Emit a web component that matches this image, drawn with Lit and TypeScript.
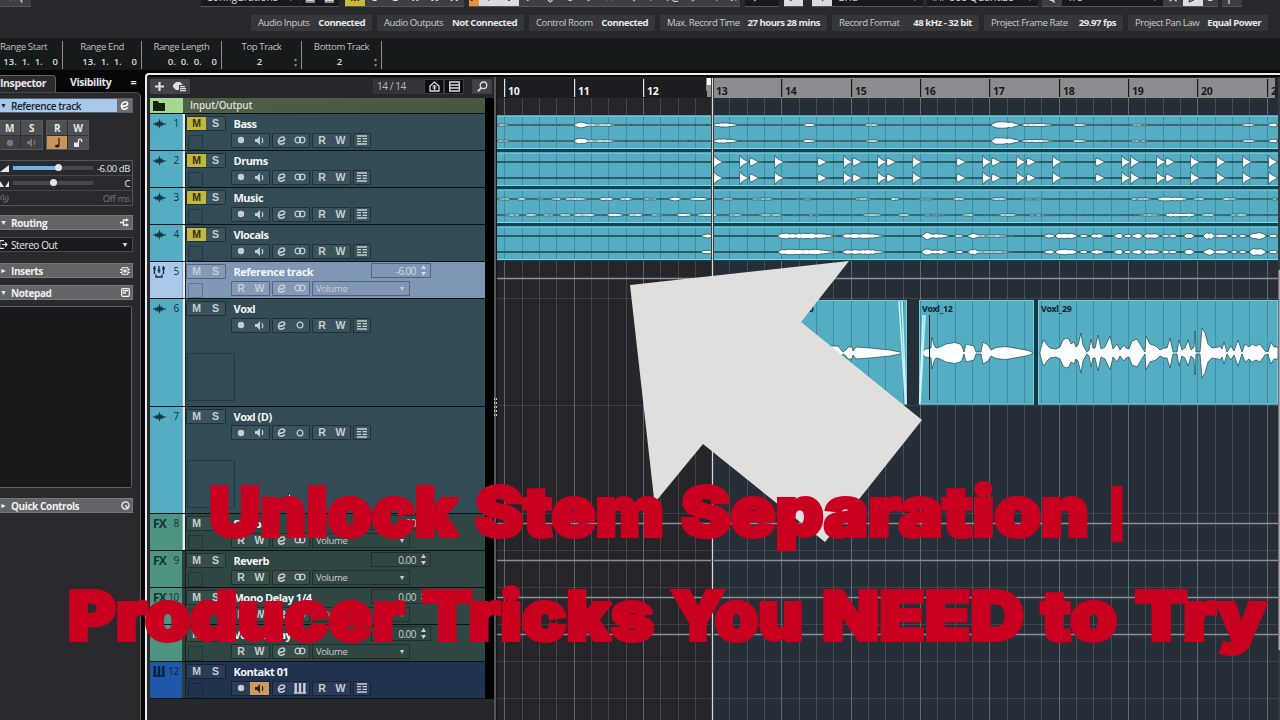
import { LitElement, html, svg, css, nothing } from 'lit';
import { customElement, property } from 'lit/decorators.js';
import { classMap } from 'lit/directives/class-map.js';

type Kind = 'audio' | 'ref' | 'fx' | 'inst';

interface Track {
  no: number;
  name: string;
  kind: Kind;
  muted?: boolean;
  mono?: boolean;
  tall?: boolean;
  linked?: boolean;
  gain?: string;
}

const TRACKS: Track[] = [
  { no: 1, name: 'Bass', kind: 'audio', muted: true, linked: true },
  { no: 2, name: 'Drums', kind: 'audio', muted: true, linked: true },
  { no: 3, name: 'Music', kind: 'audio', muted: true, linked: true },
  { no: 4, name: 'Vlocals', kind: 'audio', muted: true, linked: true },
  { no: 5, name: 'Reference track', kind: 'ref', linked: true, gain: '-6.00' },
  { no: 6, name: 'Voxl', kind: 'audio', mono: true, tall: true, linked: true },
  { no: 7, name: 'Voxl (D)', kind: 'audio', mono: true, tall: true, linked: true },
  { no: 8, name: 'Slapback', kind: 'fx', linked: true, gain: '0.00' },
  { no: 9, name: 'Reverb', kind: 'fx', gain: '0.00' },
  { no: 10, name: 'Mono Delay 1/4', kind: 'fx', gain: '0.00' },
  { no: 11, name: 'Vocal Delay', kind: 'fx', gain: '0.00' },
  { no: 12, name: 'Kontakt 01', kind: 'inst' },
];

const icon = (w: number, h: number, body: unknown) =>
  html`<svg width=${w} height=${h} viewBox="0 0 ${w} ${h}" fill="none" stroke="currentColor">${body}</svg>`;

const icons = {
  wave: icon(13, 12, svg`<path d="M0 5.500h2l.8-2 .8 2L5 3l.5 1.500L6.500.3l1 4.200.8-2 .8 3 .9-1.500.6 1.500H13v1h-2.500l-.7 1.500-.8-1.500-.8 2.500-.7-2-1 4-.9-4L5 9.300 4 7l-1 1.500-.8-2H0z" fill="currentColor" stroke="none"/>`),
  faders: icon(12, 12, svg`<path d="M1.500 0v8M6 0v7M10.500 0v8M0 2.500h3M4.500 4.500h3M9 2.500h3M3 8.500v2.500h6v-2.500" stroke-width="1.400"/>`),
  keys: icon(12, 11, svg`<path d="M1.700 0v10M6 0v10M10.300 0v10" stroke-width="2.400"/><path d="M0 10h12" stroke-width="1.500"/>`),
  folder: icon(12, 10, svg`<path d="M0 0h5l1 2h6v8H0z" fill="currentColor" stroke="none"/>`),
  rec: icon(8, 8, svg`<circle cx="4" cy="4" r="3.200" fill="currentColor" stroke="none"/>`),
  speaker: icon(9, 9, svg`<path d="M0 3h2l3-3v9L2 6H0z" fill="currentColor" stroke="none"/><path d="M7 2q1.500 2.500 0 5" stroke-width="1.200"/>`),
  edit: icon(9, 9, svg`<path d="M.8 5.200C4 5.600 8 4.600 7.700 2.500 7.400.3 3.400.4 2 3 .6 5.800 1.800 8.200 4.200 8.200c1.400 0 2.700-.7 3.600-1.700" stroke-width="1.500"/>`),
  stereo: icon(12, 8, svg`<circle cx="3.800" cy="4" r="2.800" stroke-width="1.200"/><circle cx="8.200" cy="4" r="2.800" stroke-width="1.200"/>`),
  mono: icon(8, 8, svg`<circle cx="4" cy="4" r="2.900" stroke-width="1.200"/>`),
  lanes: icon(10, 10, svg`<path d="M0 1h10M0 9h10M0 3.700h4M0 6.300h4M5.500 3.700H10M5.500 6.300H10" stroke-width="1.300"/>`),
  search: icon(11, 11, svg`<circle cx="6.500" cy="4.300" r="3.300" stroke-width="1.300"/><path d="M4.200 6.800 .8 10.300" stroke-width="1.700"/>`),
  house: icon(11, 11, svg`<path d="M1 5 5.500 1 10 5v5H1z" stroke-width="1.300"/><path d="M3.500 5h4M3.500 7h4M5.500 4v5"/>`),
  list: icon(11, 11, svg`<path d="M.7 1h9.600v9H.7zM1 4h9M1 7h9" stroke-width="1.300"/>`),
  plus: icon(9, 9, svg`<path d="M4.500 0v9M0 4.500h9" stroke-width="2.200"/>`),
  presets: icon(13, 10, svg`<path d="M3 0h4l3 3H6v5H3L0 5V3z" fill="currentColor" stroke="none"/><path d="M7 4.700h5M7 6.700h6M7 8.700h6" stroke-width="1.200"/>`),
  note: icon(7, 10, svg`<path d="M5 0v8" stroke-width="1.200"/><ellipse cx="3.200" cy="8" rx="2.200" ry="1.600" fill="currentColor" stroke="none"/>`),
  lock: icon(9, 9, svg`<path d="M0 4.500h5V9H0z" fill="currentColor" stroke="none"/><path d="M4.500 5V2.200Q6 0 7.600 2.200V4" stroke-width="1.300"/>`),
  ramp: icon(9, 7, svg`<path d="M0 7 9 0v7z" fill="currentColor" stroke="none"/>`),
  pan: icon(9, 7, svg`<path d="M0 1l4 6H0zM9 1L5 7h4z" fill="currentColor" stroke="none"/>`),
  delay: icon(9, 9, svg`<circle cx="4.500" cy="4.500" r="1.500"/><circle cx="4.500" cy="4.500" r="3.800" stroke-dasharray="7 3"/>`),
  route: icon(10, 9, svg`<path d="M0 4.500h3M7 2H3.500v5H7" stroke-width="1.300"/><path d="M6 .2l3 1.800-3 1.800zM6 5.200l3 1.800-3 1.800z" fill="currentColor" stroke="none"/>`),
  output: icon(9, 9, svg`<path d="M5 .7H.7v7.600H5M3 4.500h5M6 2.500l2 2-2 2" stroke-width="1.200"/>`),
  insert: icon(10, 8, svg`<path d="M2 .7h6v6.600H2zM0 2.500h2M0 5.500h2M8 2.500h2M8 5.500h2" stroke-width="1"/><path d="M3.500 2.500h3v3h-3z" fill="currentColor" stroke="none"/>`),
  pad: icon(9, 9, svg`<rect x=".7" y=".7" width="7.600" height="7.600" rx="1" stroke-width="1.300"/><path d="M2 2.800h5M2 5h3" stroke-width="1.500"/>`),
  knob: icon(9, 9, svg`<circle cx="4.500" cy="4.500" r="3.600" stroke-width="1.300"/><path d="M4.500 4.500 7 7.500" stroke-width="1.500"/>`),
};

@customElement('daw-toolbar')
export class DawToolbar extends LitElement {
  static styles = css`
    :host {
      display: flex;
      height: 7px;
      overflow: hidden;
      align-items: flex-end;
      background: #28292d;
      color: #d8d8da;
      font: 10.5px 'Open Sans', sans-serif;
    }
    .item {
      display: flex;
      flex: none;
      align-items: center;
      justify-content: center;
      height: 23px;
      box-sizing: border-box;
      padding-top: 3px;
      background: #3e3f43;
      border-bottom: 1px solid #54555a;
      font-weight: 700;
    }
    .drop {
      background: #17181b;
      justify-content: space-between;
      padding: 3px 5px 0;
      font-weight: 400;
    }
    .dark { background: #17181b; }
    .yellow { background: #cbb93a; color: #222; }
    .orange { background: #e8913c; color: #222; }
    .white { background: #dcdcde; color: #222; }
    .gap { flex: none; }
  `;

  items: [string, number, string][] = [
    ['', 31, '✕ ('], ['gap', 170, ''], ['drop', 98, 'Configurations'], ['gap', 1, ''], ['dark', 19, '▣'], ['dark', 20, '▤'],
    ['gap', 6, ''], ['yellow', 20, 'M'], ['', 20, 'S'], ['', 20, 'L'], ['', 20, 'R'], ['', 19, 'W'], ['', 20, 'A'], ['gap', 5, ''],
    ['orange', 10, '▸'], ['white', 20, '▾'], ['white', 20, 'I'], ['', 20, '/'], ['', 21, '◇'], ['', 20, '0'], ['', 17, '!'],
    ['', 24, '✕'], ['', 20, '⟍'], ['', 20, '●'], ['', 24, '♪@'], ['', 22, '⟋'], ['', 20, '▾'], ['', 13, '\\●'], ['gap', 5, ''],
    ['dark', 34, '⟋  ▾'], ['gap', 5, ''], ['white', 19, '⟋'], ['gap', 9, ''], ['white', 20, '✳'], ['drop', 91, 'Grid'], ['gap', 4, ''],
    ['drop', 111, '## Use Quantize'], ['gap', 4, ''], ['', 20, 'Q'], ['drop', 101, '1/8'], ['', 20, '⋏'], ['white', 20, '▷'], ['', 15, 'S'],
    ['gap', 4, ''], ['', 20, '|='],
  ];

  render() {
    return this.items.map(([cls, w, text]) => cls === 'gap'
      ? html`<span class="gap" style="width:${w}px"></span>`
      : html`<span class="item ${cls}" style="width:${w}px">${text}${cls === 'drop' ? html`<span>▾</span>` : nothing}</span>`);
  }
}

@customElement('daw-status')
export class DawStatus extends LitElement {
  static styles = css`
    :host {
      display: flex;
      gap: 5px;
      height: 31px;
      box-sizing: border-box;
      padding: 8px 0 7px 251px;
      background: #28292d;
      color: #c9cacc;
      font: 9.600px/15px 'Open Sans', sans-serif;
      letter-spacing: -0.45px;
      white-space: nowrap;
    }
    .pill {
      display: flex;
      flex: none;
      justify-content: space-between;
      box-sizing: border-box;
      padding: 0 7px;
      background: #36373b;
      border-radius: 1px;
    }
    b { color: #e8e8ea; letter-spacing: -0.5px; }
  `;

  items: [string, string, number][] = [
    ['Audio Inputs', 'Connected', 121],
    ['Audio Outputs', 'Not Connected', 147],
    ['Control Room', 'Connected', 126],
    ['Max. Record Time', '27 hours 28 mins', 167],
    ['Record Format', '48 kHz - 32 bit', 147],
    ['Project Frame Rate', '29.97 fps', 139],
    ['Project Pan Law', 'Equal Power', 140],
  ];

  render() {
    return this.items.map(([label, value, w]) =>
      html`<div class="pill" style="width:${w}px"><span>${label}</span><b>${value}</b></div>`);
  }
}

@customElement('daw-infoline')
export class DawInfoline extends LitElement {
  static styles = css`
    :host {
      display: flex;
      height: 32px;
      box-sizing: border-box;
      padding: 3px 0 1px;
      background: #171a1b;
      color: #bfc1c3;
      font: 9.600px/12px 'Open Sans', sans-serif;
      letter-spacing: -0.4px;
    }
    .cell {
      display: flex;
      flex: none;
      flex-direction: column;
      gap: 3px;
      box-sizing: border-box;
      border-right: 1px solid #8b8d8f;
      white-space: pre;
      text-align: center;
    }
    .cell.first { text-align: left; }
    .value { font-weight: 600; font-size: 9.5px; color: #dcdcde; letter-spacing: 0; }
    .right { text-align: right; padding-right: 4px; }
    .spin { display: flex; justify-content: center; position: relative; padding-right: 4px; }
    .arrows {
      position: absolute;
      right: 3px;
      top: 0;
      font-size: 5px;
      line-height: 6px;
      color: #85878a;
    }
  `;

  render() {
    const pos = (label: string, value: string, w: number, cls = '') =>
      html`<div class="cell ${cls}" style="width:${w}px"><span>${label}</span><span class="value right">${value}</span></div>`;
    const num = (label: string) => html`<div class="cell" style="width:80px"><span>${label}</span><span class="value spin">2<span class="arrows">▲<br>▼</span></span></div>`;
    return html`
      ${pos('Range Start', '13.  1.  1.    0', 63, 'first')}
      ${pos('Range End', '13.  1.  1.    0', 79)}
      ${pos('Range Length', '0.  0.  0.    0', 80)}
      ${num('Top Track')}${num('Bottom Track')}
    `;
  }
}

@customElement('daw-inspector')
export class DawInspector extends LitElement {
  static styles = css`
    :host {
      display: flex;
      flex-direction: column;
      width: 145px;
      flex: none;
      background: #060607;
      color: #e6e6e8;
      font: 10px 'Open Sans', sans-serif;
      letter-spacing: -0.4px;
      white-space: nowrap;
    }
    .tabs { display: flex; height: 17px; font-weight: 700; line-height: 15px; font-size: 10.500px; }
    .tab {
      width: 56px;
      box-sizing: border-box;
      border-top: 1px solid #606165;
      border-right: 1px solid #606165;
      border-radius: 0 4px 0 0;
      background: #2a2b2f;
    }
    .other { padding-left: 14px; flex: 1; }
    .menu { padding-right: 9px; }
    .panel {
      flex: 1;
      width: 141px;
      box-sizing: border-box;
      border-top: 1px solid #45464a;
      border-right: 1px solid #606165;
      border-radius: 0 5px 0 0;
      background: #2a2a2e;
      padding: 5px 7px 0 0;
      display: flex;
      flex-direction: column;
    }
    .bar {
      display: flex;
      align-items: center;
      height: 15px;
      flex: none;
      box-sizing: border-box;
      border: 1px solid #77787b;
      border-left: 0;
      background: #636466;
      font-weight: 700;
      color: #f0f0f1;
    }
    .bar svg { margin-right: 2px; }
    .name { flex: 1; }
    .tri { width: 11px; font-size: 7px; }
    .bar.track { background: #a9c8ea; color: #17242f; font-weight: 600; border-color: #566472; }
    .end {
      align-self: stretch;
      display: flex;
      align-items: center;
      justify-content: center;
      width: 15px;
      background: #6d6e71;
      color: #fff;
    }
    .bar .end svg { margin: 0; }
    .pads { display: flex; gap: 3px; margin-top: 7px; height: 30px; }
    .pad {
      display: grid;
      grid-template-columns: 1fr 1fr;
      grid-template-rows: 1fr 1fr;
      gap: 1px;
      width: 43px;
      background: #2f3034;
      border: 1px solid #55565a;
      box-sizing: border-box;
      font-weight: 700;
    }
    .pad:first-child { border-left: 0; width: 44px; margin-left: -1px; }
    .pad span { display: flex; align-items: center; justify-content: center; background: #4f5053; }
    .pad .off { background: #3f4043; color: #77787a; }
    .pad .lit { background: #c8945a; color: #2a1a0a; }
    .box { margin-top: 10px; border: 1px solid #55565a; border-left: 0; flex: none; }
    .line {
      display: flex;
      align-items: center;
      height: 15px;
      box-sizing: border-box;
      padding-right: 2px;
      border-bottom: 1px solid #46474b;
    }
    .line:last-child { border: 0; color: #76777a; height: 14px; }
    .line svg { width: 9px; margin-right: 4px; }
    .slider { position: relative; width: 80px; height: 4px; background: #47484c; }
    .fill { height: 4px; background: #6fb0e6; }
    .thumb {
      position: absolute;
      top: -2px;
      width: 7px;
      height: 7px;
      margin-left: -3px;
      border-radius: 50%;
      background: #e6e6e8;
    }
    .val { flex: 1; text-align: right; font-size: 9.500px; }
    .routing { margin-top: 9px; }
    .select {
      display: flex;
      align-items: center;
      height: 15px;
      flex: none;
      box-sizing: border-box;
      margin: 7px 0 11px;
      border: 1px solid #4a4b4f;
      border-left: 0;
      background: #1a1a1d;
    }
    .select svg { margin: 0 3px 0 -1px; }
    .arrow { font-size: 7px; padding-right: 4px; }
    .notepad { margin-top: 7px; }
    .notes {
      height: 182px;
      flex: none;
      box-sizing: border-box;
      margin: 6px 1px 10px 0;
      border: 1px solid #606165;
      border-left: 0;
      background: #19191b;
      border-radius: 0 2px 2px 0;
    }
  `;

  render() {
    const bar = (name: string, mark: string, ic: unknown, cls = '') =>
      html`<div class="bar ${cls}"><span class="tri">${mark}</span><span class="name">${name}</span>${ic}</div>`;
    const slider = (pos: number, filled: boolean) => html`<div class="slider">
      <div class="fill" style="width:${filled ? pos : 0}px"></div><div class="thumb" style="left:${pos}px"></div></div>`;
    return html`
      <div class="tabs"><div class="tab">Inspector</div><div class="other">Visibility</div><div class="menu">=</div></div>
      <div class="panel">
        ${bar('Reference track', '▼', html`<span class="end">${icons.edit}</span>`, 'track')}
        <div class="pads">
          <div class="pad"><span>M</span><span>S</span><span class="off">${icons.rec}</span><span class="off">${icons.speaker}</span></div>
          <div class="pad"><span>R</span><span>W</span><span class="lit">${icons.note}</span><span>${icons.lock}</span></div>
        </div>
        <div class="box">
          <div class="line">${icons.ramp}${slider(45, true)}<span class="val">-6.00 dB</span></div>
          <div class="line">${icons.pan}${slider(40, false)}<span class="val">C</span></div>
          <div class="line">${icons.delay}<span class="val">Off ms</span></div>
        </div>
        ${bar('Routing', '▼', icons.route, 'routing')}
        <div class="select">${icons.output}<span class="name">Stereo Out</span><span class="arrow">▼</span></div>
        ${bar('Inserts', '►', icons.insert)}
        ${bar('Notepad', '▼', icons.pad, 'notepad')}
        <div class="notes"></div>
        ${bar('Quick Controls', '►', icons.knob)}
      </div>
    `;
  }
}

@customElement('daw-track')
export class DawTrack extends LitElement {
  static styles = css`
    :host { display: block; font: 10px 'Open Sans', sans-serif; }
    .row {
      display: flex;
      height: 37px;
      box-sizing: border-box;
      border-bottom: 1px solid #0a1416;
      color: #c6ced1;
      --edge: #1c3138;
    }
    .tall { height: 107.500px; }
    .tag {
      display: flex;
      justify-content: space-between;
      width: 32px;
      box-sizing: border-box;
      padding: 4px 3px 0 3px;
      background: #54adc3;
      color: #12333c;
      line-height: 11px;
      letter-spacing: -0.3px;
    }
    .tag svg { flex: none; }
    .fx { font-weight: 700; font-size: 12px; letter-spacing: -0.8px; }
    .link { width: 4px; box-sizing: border-box; border-right: 1px solid #12262b; background: #2d4038; }
    .linked .link { background: #e9ecee; border-left: 1px solid #7fb4c0; }
    .body { flex: 1; display: flex; background: #324b55; }
    .ref .body { background: #7f96b4; }
    .ref { --edge: #52657f; }
    .ref .tag { background: #a9c8ea; }
    .fxrow .body { background: #2f4642; }
    .fxrow .tag { background: #4c9480; }
    .fxrow { --edge: #1d302d; }
    .inst .body { background: #223350; }
    .inst .tag { background: #1f58a8; color: #0c1c38; }
    .inst { --edge: #14213c; }
    .left {
      display: flex;
      flex-direction: column;
      justify-content: space-between;
      width: 45px;
      padding: 2px 0 0;
      box-sizing: border-box;
    }
    .group {
      display: flex;
      flex: none;
      align-items: center;
      height: 15px;
      box-sizing: border-box;
      border: 1px solid var(--edge);
      border-radius: 1px;
      background: #ffffff0c;
      font: 700 10.500px/13px 'Liberation Sans', sans-serif;
    }
    .group span {
      display: flex;
      flex: 1;
      align-self: stretch;
      align-items: center;
      justify-content: center;
    }
    .ms { width: 40px; }
    .on { background: #c2b540; color: #33300f; }
    .hot { background: #cc9a60; color: #3a2408; }
    .thumb {
      width: 15px;
      height: 15px;
      box-sizing: border-box;
      margin-left: 2px;
      border: 1px solid var(--edge);
      border-radius: 1px;
      opacity: 0.7;
    }
    .tall .thumb { width: 48px; height: 48px; margin: 0 0 5px 1px; }
    .right { flex: 1; display: flex; flex-direction: column; padding-top: 1px; }
    .top { display: flex; height: 17.500px; align-items: flex-start; }
    .name {
      width: 140px;
      box-sizing: border-box;
      padding-left: 2.500px;
      line-height: 17px;
      font-size: 11px;
      font-weight: 700;
      letter-spacing: -0.5px;
      color: #f2f5f6;
      white-space: nowrap;
    }
    .gain {
      display: flex;
      align-items: center;
      justify-content: flex-end;
      gap: 5px;
      width: 60px;
      height: 15px;
      padding-right: 4px;
      box-sizing: border-box;
      border: 1px solid var(--edge);
      letter-spacing: -0.5px;
    }
    .ref .gain { color: #cfdbe9; }
    .ctrls { display: flex; gap: 2px; }
    .pair { width: 38.500px; }
    .one { width: 18px; }
    .drop {
      display: flex;
      align-items: center;
      justify-content: space-between;
      width: 98px;
      height: 15px;
      box-sizing: border-box;
      padding: 0 4px 0 3px;
      border: 1px solid var(--edge);
      font-size: 9.500px;
      letter-spacing: -0.4px;
    }
    .tri { font-size: 7px; }
  `;

  @property({ attribute: false }) track!: Track;

  render() {
    const t = this.track;
    const bus = t.gain !== undefined;
    const cls = classMap({ row: true, tall: !!t.tall, linked: !!t.linked, ref: t.kind === 'ref', fxrow: t.kind === 'fx', inst: t.kind === 'inst' });
    const badge = { audio: icons.wave, ref: icons.faders, fx: html`<span class="fx">FX</span>`, inst: icons.keys }[t.kind];
    const link = t.kind === 'inst' ? icons.keys : t.mono ? icons.mono : icons.stereo;
    const rw = html`<div class="group pair"><span>R</span><span>W</span></div>`;
    const edit = html`<div class="group pair"><span>${icons.edit}</span><span>${link}</span></div>`;
    return html`
      <div class=${cls}>
        <div class="tag">${badge}<span>${t.no}</span></div>
        <div class="link"></div>
        <div class="body">
          <div class="left">
            <div class="group ms"><span class=${t.muted ? 'on' : ''}>M</span><span>S</span></div>
            <div class="thumb"></div>
          </div>
          <div class="right">
            <div class="top">
              <span class="name">${t.name}</span>
              ${bus ? html`<span class="gain">${t.gain}${icon(5, 11, svg`<path d="M0 4 2.500 0 5 4zM0 7h5l-2.500 4z" fill="currentColor" stroke="none"/>`)}</span>` : nothing}
            </div>
            <div class="ctrls">
              ${bus
                ? html`${rw}${edit}<div class="drop">Volume<span class="tri">▼</span></div>`
                : html`<div class="group pair"><span>${icons.rec}</span><span class=${t.kind === 'inst' ? 'hot' : ''}>${icons.speaker}</span></div>
                  ${edit}${rw}<div class="group one"><span>${icons.lanes}</span></div>`}
            </div>
          </div>
        </div>
      </div>
    `;
  }
}

@customElement('daw-tracklist')
export class DawTracklist extends LitElement {
  static styles = css`
    :host {
      display: flex;
      flex-direction: column;
      width: 349px;
      flex: none;
      box-sizing: border-box;
      padding-left: 3px;
      border-right: 2px solid #55565a;
      background: #26272b;
      color: #dcdcde;
      font: 10px 'Open Sans', sans-serif;
    }
    .head { display: flex; align-items: center; height: 19px; padding-bottom: 2px; }
    .tools, .btn {
      display: flex;
      align-items: center;
      justify-content: space-around;
      height: 15px;
      background: #424347;
      width: 40px;
    }
    .count {
      width: 51px;
      height: 15px;
      line-height: 14px;
      margin-left: auto;
      padding-left: 4px;
      box-sizing: border-box;
      background: #34353a;
      color: #b9babd;
      letter-spacing: -0.4px;
    }
    .btn { width: 20px; background: #0e0e10; border: 1px solid #3c3d41; box-sizing: border-box; margin: 0; }
    .find { background: #424347; margin: 0 2px 0 8px; }
    .rows { background: #000; padding-right: 9px; }
    .io { display: flex; height: 16px; box-sizing: border-box; border-bottom: 1px solid #0a1416; }
    .folder { display: flex; align-items: center; padding-left: 3px; width: 33px; box-sizing: border-box; background: #a4d890; color: #13200f; }
    .title {
      flex: 1;
      padding-left: 7px;
      background: linear-gradient(90deg, #4f6048, #48583e);
      line-height: 15px;
      font-weight: 600;
      letter-spacing: -0.2px;
    }
  `;

  render() {
    return html`
      <div class="head">
        <div class="tools">${icons.plus}${icons.presets}</div>
        <div class="count">14 / 14</div>
        <div class="btn">${icons.house}</div><div class="btn">${icons.list}</div>
        <div class="btn find">${icons.search}</div>
      </div>
      <div class="rows">
        <div class="io"><span class="folder">${icons.folder}</span><span class="title">Input/Output</span></div>
        ${TRACKS.map(t => html`<daw-track .track=${t}></daw-track>`)}
      </div>
    `;
  }
}

type Bump = [from: number, to: number, amp: number];

// cheap repeatable noise, 0..1
const noise = (n: number) => Math.abs(Math.sin(n * 12.9898) * 43758.5453) % 1;

const envelope = (pts: number[][], y: number) => {
  const up = pts.map(([x, a]) => `${x.toFixed(1)} ${(y - a).toFixed(1)}`);
  const down = pts.slice().reverse().map(([x, a]) => `${x.toFixed(1)} ${(y + a).toFixed(1)}`);
  return `M${up.join('L')}L${down.join('L')}Z`;
};

const noisy = (base: number, bumps: Bump[], seed: number) => {
  const pts: number[][] = [];
  for (let x = 497; x <= 1278; x += 2) {
    let a = base * (0.3 + noise(x + seed) * 0.9);
    for (const [from, to, amp] of bumps) {
      if (x >= from && x <= to) {
        const taper = Math.min(1, (x - from + 1.5) / 4, (to - x + 1) / ((to - from) * 0.35));
        a = Math.max(a, amp * taper * (0.7 + noise(x * 3 + seed) * 0.4));
      }
    }
    pts.push([x, a]);
  }
  return pts;
};

const HITS = [714, 740, 750, 775, 818, 844, 853, 878, 887, 913, 957, 983, 992, 1017, 1027, 1053, 1096, 1122, 1131, 1157, 1166, 1191, 1217, 1243, 1269];
const SOFT = [750, 818, 853, 887, 957, 992, 1027, 1096, 1166];

const drums = () => {
  const pts: number[][] = [[497, 0]];
  HITS.forEach((x, i) => {
    const soft = SOFT.includes(x);
    const room = (HITS[i + 1] ?? 1290) - x;
    pts.push([x - 0.5, 0.1], [x, soft ? 4 : 6.500], [x + 2, soft ? 3.500 : 3.800], [x + 4, 2.500], [x + 7, 0.9], [x + 8, 0.5]);
    if (room > 16) pts.push([x + 10, 0.5], [x + 13, 0]);
  });
  return pts;
};

const BASS: Bump[] = [[497, 511, 1.1], [575, 588, 2.600], [586, 620, 1.200], [714, 738, 2], [803, 817, 1.500], [865, 880, 1.200], [992, 1020, 3], [1022, 1056, 1.400], [1073, 1088, 1.300], [1130, 1150, 0.9], [1242, 1256, 1.200], [1269, 1284, 2]];
const MUSIC: Bump[] = [[497, 512, 1], [517, 527, 1.200], [534, 546, 0.9], [551, 562, 1.200], [565, 590, 1.200], [600, 614, 1.700], [620, 634, 1.300], [642, 660, 0.9], [669, 682, 1.700], [690, 710, 1.500], [720, 736, 1], [750, 777, 1], [799, 812, 0.8], [854, 875, 1.100], [890, 900, 1.400], [915, 940, 0.8], [953, 965, 1.200], [992, 1008, 1.300], [1020, 1050, 0.8], [1130, 1155, 1], [1158, 1190, 1.800], [1193, 1205, 1.300], [1222, 1240, 1.100], [1269, 1278, 1]];
const VOCALS: Bump[] = [[702, 713, 2], [779, 838, 2.700], [843, 886, 2.300], [923, 931, 3.800], [929, 949, 2.200], [955, 963, 1.600], [969, 978, 2.800], [975, 1015, 1.100], [1045, 1054, 2.100], [1056, 1078, 2.800], [1080, 1087, 1.800], [1091, 1104, 2.200], [1115, 1122, 2.700], [1124, 1131, 1.700], [1133, 1142, 2.700], [1144, 1160, 2.500], [1162, 1168, 1.800], [1169, 1176, 1.800], [1185, 1193, 3], [1204, 1214, 3.200], [1215, 1229, 1.800], [1231, 1237, 1.600], [1239, 1246, 1.600], [1250, 1266, 3.400], [1269, 1278, 1.800]];

const STEREO = [
  { y: 115.500, pts: [noisy(0.45, BASS, 1), noisy(0.45, BASS, 7)] },
  { y: 152.500, pts: [drums(), drums()] },
  { y: 189.500, pts: [noisy(0.5, MUSIC, 3), noisy(0.5, MUSIC.map(([a, b, c]) => [a + 8, b + 10, c] as Bump), 5)] },
  { y: 226.500, pts: [noisy(0.1, VOCALS, 2), noisy(0.1, VOCALS, 4)] },
];

const VOX = [
  { x: 780, w: 127, label: 'Voxl_10', pts: [[800, 5], [832, 7], [838, 7], [843, 1], [846, 3], [848, 6], [852, 6], [853, 2], [856, 6], [870, 5], [890, 3], [902, 0.5]] },
  { x: 919, w: 115, label: 'Voxl_12', pts: [[922, 0.3], [925, 4], [929, 4.500], [931, 5], [932, 16], [934, 8], [936, 5], [940, 6], [946, 9], [955, 10.500], [960, 9], [962, 7], [964, 1], [966, 9], [974, 7], [976, 1], [981, 1], [983, 11], [988, 8], [991, 3], [996, 5.500], [1005, 6.500], [1012, 5.500], [1020, 4], [1028, 2.500], [1033, 0.5]] },
  { x: 1038, w: 240, label: 'Voxl_29', pts: [[1040, 1], [1042, 9], [1044, 13], [1047, 8], [1050, 5], [1056, 4], [1060, 6], [1063, 13], [1066, 15], [1069, 14], [1071, 9], [1074, 11], [1076, 6], [1078, 8], [1081, 20], [1083, 8], [1087, 0.8], [1089, 3], [1091, 14], [1093, 5], [1095, 5], [1098, 18], [1101, 4], [1105, 6], [1110, 17], [1113, 4], [1117, 9], [1120, 3], [1124, 8], [1126, 5], [1129, 4], [1132, 12], [1137, 14], [1143, 4], [1145, 1], [1146, 17], [1150, 9], [1156, 7], [1160, 3], [1164, 5], [1167, 5], [1170, 15], [1173, 1], [1177, 1], [1179, 13], [1182, 3], [1185, 5], [1188, 13], [1191, 3], [1194, 6], [1195, 22], [1196, 1], [1200, 1], [1202, 25], [1205, 20], [1208, 9], [1212, 5], [1218, 6], [1220, 7], [1222, 4], [1224, 11], [1227, 1], [1231, 7], [1234, 2], [1238, 13], [1242, 1], [1245, 9], [1249, 6], [1252, 9], [1256, 7], [1260, 9], [1265, 2], [1268, 1], [1271, 11], [1274, 6], [1278, 6]] },
];

const BAR = 69.32;
const FIRST_BAR = 504.200;

@customElement('daw-arrange')
export class DawArrange extends LitElement {
  static styles = css`
    :host { display: block; flex: 1; overflow: hidden; background: #26262a; }
    svg { display: block; }
    .num { font: 700 10.500px 'Open Sans', sans-serif; letter-spacing: -0.3px; }
    .label { font: 700 8.800px 'Open Sans', sans-serif; letter-spacing: -0.3px; fill: #0b2027; }
    .clip { fill: #54adc3; }
    .shine { stroke: #8ad3e2; }
    .grid { stroke: #ffffff26; }
    .gridbar { stroke: #ffffff48; }
    .cut { stroke: #1c6c8070; }
    .axis { stroke: #1d5965; }
    .wave { fill: #fbffff; stroke: #1f444d; stroke-width: 0.7; stroke-linejoin: round; }
    .fade { stroke: #c9f3fa; stroke-width: 1.5; }
  `;

  gridLines(y1: number, y2: number, onClip: boolean, from = 497, to = 1278) {
    const out = [];
    for (let i = 0; i < 45; i++) {
      const x = Math.round(FIRST_BAR + (i * BAR) / 4) + 0.5;
      if (x > from && x < to) {
        out.push(svg`<line class=${onClip ? 'cut' : i % 4 ? 'grid' : 'gridbar'} x1=${x} x2=${x} y1=${y1} y2=${y2}/>`);
      }
    }
    return out;
  }

  render() {
    const bars = Array.from({ length: 12 }, (_, i) => i);
    return html`
      <svg width="784" height="643" viewBox="496 77 784 643">
        <rect x="496" y="77" width="1.500" height="643" fill="#17181a"/>
        <rect x="713" y="98" width="565" height="622" fill="#262e38"/>
        <rect x="497" y="78" width="216" height="20" fill="#1c1d21"/>
        <rect x="713" y="78" width="562" height="20" fill="#8c8c90"/>
        ${bars.map(i => {
          const x = Math.round(FIRST_BAR + i * BAR);
          return svg`<rect x=${x} y="79" width="1.200" height="18" fill=${i < 3 ? '#e4e4e6' : '#1a1a1c'}/>
            <text class="num" x=${x + 4} y="95" fill=${i < 3 ? '#f2f2f4' : '#1a1a1c'}>${i === 11 ? '2' : i + 10}</text>`;
        })}
        ${this.gridLines(98, 720, false)}
        ${[299, 406, 514, 551, 588, 625, 662, 699].map(y => svg`<line x1="497" x2="1278" y1=${y - 0.5} y2=${y - 0.5} stroke="#ffffff1c"/>`)}
        ${[278.500, 523.500, 560.500, 597.500, 634.500].map(y => svg`<line x1="497" x2="1278" y1=${y} y2=${y} stroke="#8b9097" stroke-width="1.300"/>`)}
        <rect x="497" y="115" width="781" height="146" fill="#0d4552"/>
        ${STEREO.map(c => svg`
          <rect class="clip" x="497" y=${c.y} width="781" height="33.500"/>
          ${this.gridLines(c.y, c.y + 33.500, true)}
          <path class="shine" d="M497 ${c.y + 0.5}H1278M497 ${c.y + 33}H1278"/>
          ${c.pts.map((p, i) => {
            const y = c.y + 9.500 + i * 16;
            return svg`<line class="axis" x1="497" x2="1278" y1=${y} y2=${y}/><path class="wave" d=${envelope(p, y)}/>`;
          })}`)}
        <rect x="1034" y="300" width="4" height="105" fill="#123a46"/>
        ${VOX.map(c => svg`
          <rect class="clip" x=${c.x} y="300" width=${c.w} height="104.500"/>
          ${this.gridLines(300, 404, true, c.x, c.x + c.w)}
          <rect x=${c.x + 0.5} y="300.500" width=${c.w - 1} height="103.500" fill="none" stroke="#7cc9da"/>
          <path class="wave" d=${envelope(c.pts, 353)}/>
          <text class="label" x=${c.x + 3} y="311.500">${c.label}</text>`)}
        <path class="fade" d="M899 301 905.500 404M902 301 906 404M925 315 920 404M923 315 919.500 404"/>
        <path d="M929.500 315V400" stroke="#10222a"/>
        <path d="M706.500 78h5v7q-4 1-4 6h-1z" fill="#fff"/><rect x="707" y="85" width="4" height="12" fill="#8c8c90"/>
        <rect x="711" y="78" width="3" height="642" fill="#15171a"/>
        <rect x="711.800" y="78" width="1.400" height="642" fill="#d9dadc"/>
        <rect x="1278" y="77" width="2" height="643" fill="#3a3b40"/>
        <rect x="1278.500" y="270" width="1.500" height="380" fill="#a8a8ac"/>
      </svg>
    `;
  }
}

const HEADLINE: [string, number, number, number][] = [
  ['Unlock', 210, 459, 538], ['Stem', 476, 665, 538], ['Separation', 682, 1090, 538],
  ['Producer', 69, 405, 642], ['Tricks', 423, 655, 642], ['You', 672, 804, 642],
  ['NEED', 823, 1025, 642], ['to', 1042, 1118, 642], ['Try', 1136, 1267, 642],
];

@customElement('app-root')
export class AppRoot extends LitElement {
  static styles = css`
    :host {
      display: flex;
      flex-direction: column;
      position: relative;
      width: 1280px;
      height: 720px;
      overflow: hidden;
      background: #060607;
    }
    .main { display: flex; flex: 1; min-height: 0; }
    .left { display: flex; padding-top: 5px; background: #060607; }
    .frame {
      display: flex;
      flex: 1;
      min-width: 0;
      box-sizing: border-box;
      margin-top: 3px;
      border-top: 2px solid #ececee;
      border-left: 2px solid #ececee;
      border-radius: 4px 0 0 0;
      padding-top: 2px;
      overflow: hidden;
    }
    .overlay { position: absolute; left: 0; top: 0; }
    .headline {
      font: 900 68px Inter, 'Open Sans', sans-serif;
      fill: #c90020;
      stroke: #c90020;
      stroke-width: 4;
      stroke-linejoin: miter;
      stroke-miterlimit: 2;
    }
  `;

  render() {
    return html`
      <daw-toolbar></daw-toolbar>
      <daw-status></daw-status>
      <daw-infoline></daw-infoline>
      <div class="main">
        <div class="left"><daw-inspector></daw-inspector></div>
        <div class="frame">
          <daw-tracklist></daw-tracklist>
          <daw-arrange></daw-arrange>
        </div>
      </div>
      <svg class="overlay" width="1280" height="720" viewBox="0 0 1280 720">
        <path d="M494.500 398v18M496.500 398v18" stroke="#c8c8cc" stroke-dasharray="2 2"/>
        <path d="M288.500 493v11l2.500-2.500 4-1z" fill="#fff" stroke="#111" stroke-width=".7"/>
        <path d="M630 285 849 261 801 322 922 420 825 542 703 444 654.500 503z" fill="#e0dfdd"/>
        ${HEADLINE.map(([word, x1, x2, y]) => svg`<text class="headline" x=${x1 - 1} y=${y - 2}
          textLength=${x2 - x1} lengthAdjust="spacingAndGlyphs">${word}</text>`)}
        <rect x="1111.500" y="486" width="11" height="56" fill="#c90020"/>
      </svg>
    `;
  }
}
